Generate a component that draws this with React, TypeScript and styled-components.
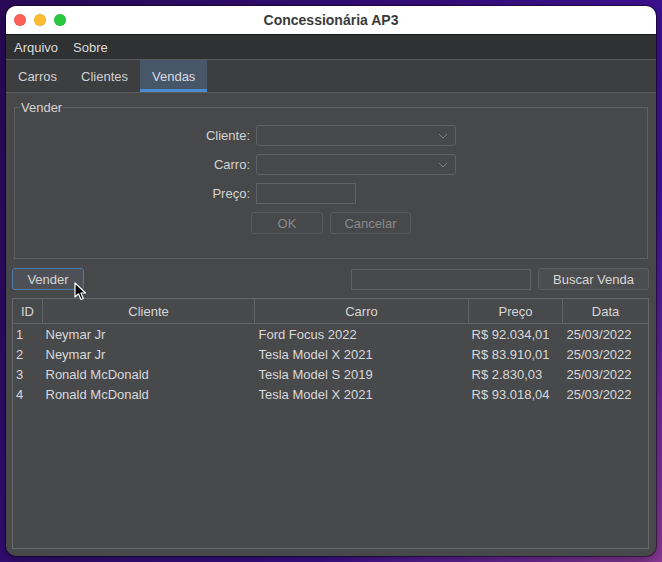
import React from 'react';
import styled, { createGlobalStyle } from 'styled-components';

const GlobalStyle = createGlobalStyle`
  html, body {
    margin: 0;
    padding: 0;
  }
  body {
    font-family: "Liberation Sans", Arial, sans-serif;
    font-size: 13px;
  }
`;

const Desktop = styled.div`
  width: 662px;
  height: 562px;
  padding: 6px;
  box-sizing: border-box;
  background:
    radial-gradient(circle at 100% 100%, #8a3a95 0%, rgba(138, 58, 149, 0) 40%),
    linear-gradient(120deg, #2a0957 0%, #3a0f86 55%, #4a16b0 100%);
  overflow: hidden;
`;

const Window = styled.div`
  position: relative;
  width: 650px;
  height: 550px;
  border-radius: 10px;
  overflow: hidden;
  display: flex;
  flex-direction: column;
  background: #47484a;
  box-shadow: 0 0 0 1px rgba(0, 0, 0, 0.45), 0 4px 14px rgba(0, 0, 0, 0.4);
`;

const TitleBar = styled.div`
  height: 28px;
  flex: 0 0 28px;
  background: #ffffff;
  border-bottom: 1px solid #151515;
  display: grid;
  grid-template-columns: 1fr auto 1fr;
  align-items: center;
`;

const Lights = styled.div`
  display: flex;
  gap: 8px;
  padding-left: 8px;
`;

const Light = styled.span<{ $color: string }>`
  width: 12px;
  height: 12px;
  border-radius: 50%;
  background: ${(p) => p.$color};
  box-shadow: inset 0 0 0 0.5px rgba(0, 0, 0, 0.15);
`;

const Title = styled.div`
  font-size: 14px;
  font-weight: bold;
  color: #3a3a3a;
`;

const MenuBar = styled.div`
  height: 24px;
  flex: 0 0 24px;
  background: #303132;
  border-bottom: 1px solid #57585a;
  display: flex;
  align-items: center;
  gap: 15px;
  padding-left: 8px;
`;

const MenuItem = styled.span`
  color: #dcdcdc;
`;

const TabBar = styled.div`
  height: 32px;
  flex: 0 0 32px;
  background: #3d3e40;
  border-bottom: 1px solid #5a5b5d;
  display: flex;
`;

const Tab = styled.div<{ $active?: boolean }>`
  padding: 0 12px;
  display: flex;
  align-items: center;
  color: ${(p) => (p.$active ? '#d8dce2' : '#d2d2d2')};
  background: ${(p) => (p.$active ? '#48566a' : 'transparent')};
  box-shadow: ${(p) => (p.$active ? 'inset 0 -3px 0 #4a8ad0' : 'none')};
`;

const Content = styled.div`
  flex: 1;
  display: flex;
  flex-direction: column;
  padding: 14px 7px 7px 6px;
  min-height: 0;
`;

const GroupBox = styled.div`
  position: relative;
  margin-left: 2px;
  margin-right: 1px;
  border: 1px solid #5e5f61;
  padding: 17px 0 24px;
`;

const GroupLegend = styled.span`
  position: absolute;
  top: -8px;
  left: 5px;
  padding: 0 1px;
  background: #47484a;
  color: #d4d4d4;
  line-height: 16px;
`;

const FormGrid = styled.div`
  display: grid;
  grid-template-columns: 1fr 200px 185px;
  column-gap: 6px;
  row-gap: 8px;
  align-items: center;
`;

const Label = styled.label`
  grid-column: 1;
  text-align: right;
  color: #d4d4d4;
`;

const Combo = styled.div`
  grid-column: 2;
  height: 21px;
  box-sizing: border-box;
  border: 1px solid #606163;
  border-radius: 3px;
  background: #47484a;
  display: flex;
  align-items: center;
  justify-content: flex-end;
  padding-right: 7px;
`;

const TextInput = styled.div<{ $width?: number }>`
  grid-column: 2;
  width: ${(p) => p.$width ?? 200}px;
  height: 21px;
  box-sizing: border-box;
  border: 1px solid #606163;
  background: #47484a;
`;

const ButtonRow = styled.div`
  grid-column: 2 / 4;
  display: flex;
  gap: 7px;
  margin-left: -5px;
`;

const Button = styled.div<{ $width: number; $disabled?: boolean; $focused?: boolean }>`
  width: ${(p) => p.$width}px;
  height: 22px;
  box-sizing: border-box;
  border: 1px solid ${(p) => (p.$focused ? '#4f7aa8' : p.$disabled ? '#5a5b5d' : '#5c5d5f')};
  border-radius: 3px;
  background: ${(p) => (p.$disabled ? '#47484a' : p.$focused ? '#4d5056' : '#4c4d4f')};
  color: ${(p) => (p.$disabled ? '#8a8a8a' : '#d6d6d6')};
  display: flex;
  align-items: center;
  justify-content: center;
`;

const Toolbar = styled.div`
  position: relative;
  margin-top: 9px;
  display: flex;
  align-items: center;
  gap: 7px;
`;

const Spacer = styled.div`
  flex: 1;
`;

const Cursor = styled.svg`
  position: absolute;
  left: 62px;
  top: 14px;
`;

const TableFrame = styled.div`
  margin-top: 8px;
  flex: 1;
  border: 1px solid #67686a;
  background: #48494b;
  overflow: hidden;
`;

const Table = styled.table`
  width: 100%;
  border-collapse: collapse;
  table-layout: fixed;
  color: #d8d8d8;
`;

const HeadCell = styled.th<{ $width?: number }>`
  width: ${(p) => (p.$width ? `${p.$width}px` : 'auto')};
  height: 24px;
  padding: 0;
  font-weight: normal;
  color: #d6d6d6;
  text-align: center;
  border-bottom: 1px solid #616264;
  border-left: 1px solid #616264;
  &:first-child {
    border-left: none;
  }
`;

const Cell = styled.td`
  height: 20px;
  padding: 0 3px 0 4px;
  white-space: nowrap;
  overflow: hidden;
  &:first-child {
    padding-left: 3px;
  }
  &:nth-child(2),
  &:nth-child(4) {
    padding-left: 3px;
  }
`;

const Chevron = () => (
  <svg width="10" height="6" viewBox="0 0 10 6">
    <path d="M1 1 L5 5 L9 1" fill="none" stroke="#7c7d80" strokeWidth="1" />
  </svg>
);

const sales = [
  { id: 1, cliente: 'Neymar Jr', carro: 'Ford Focus 2022', preco: 'R$ 92.034,01', data: '25/03/2022' },
  { id: 2, cliente: 'Neymar Jr', carro: 'Tesla Model X 2021', preco: 'R$ 83.910,01', data: '25/03/2022' },
  { id: 3, cliente: 'Ronald McDonald', carro: 'Tesla Model S 2019', preco: 'R$ 2.830,03', data: '25/03/2022' },
  { id: 4, cliente: 'Ronald McDonald', carro: 'Tesla Model X 2021', preco: 'R$ 93.018,04', data: '25/03/2022' },
];

const App: React.FC = () => {
  return (
    <>
      <GlobalStyle />
      <Desktop>
        <Window>
          <TitleBar>
            <Lights>
              <Light $color="#fe5f57" />
              <Light $color="#febc2e" />
              <Light $color="#28c840" />
            </Lights>
            <Title>Concessionária AP3</Title>
            <div />
          </TitleBar>
          <MenuBar>
            <MenuItem>Arquivo</MenuItem>
            <MenuItem>Sobre</MenuItem>
          </MenuBar>
          <TabBar>
            <Tab>Carros</Tab>
            <Tab>Clientes</Tab>
            <Tab $active>Vendas</Tab>
          </TabBar>
          <Content>
            <GroupBox>
              <GroupLegend>Vender</GroupLegend>
              <FormGrid>
                <Label>Cliente:</Label>
                <Combo>
                  <Chevron />
                </Combo>
                <Label>Carro:</Label>
                <Combo>
                  <Chevron />
                </Combo>
                <Label>Preço:</Label>
                <TextInput $width={100} />
                <ButtonRow>
                  <Button $width={72} $disabled>OK</Button>
                  <Button $width={81} $disabled>Cancelar</Button>
                </ButtonRow>
              </FormGrid>
            </GroupBox>
            <Toolbar>
              <Button $width={72} $focused>Vender</Button>
              <Spacer />
              <TextInput $width={180} />
              <Button $width={111}>Buscar Venda</Button>
              <Cursor width="14" height="20" viewBox="0 0 14 20">
                <path
                  d="M1 1 L1 15 L4.5 11.8 L7 17.5 L9.3 16.5 L6.9 11 L11.5 11 Z"
                  fill="#000"
                  stroke="#fff"
                  strokeWidth="1.2"
                  strokeLinejoin="round"
                />
              </Cursor>
            </Toolbar>
            <TableFrame>
              <Table>
                <thead>
                  <tr>
                    <HeadCell $width={29}>ID</HeadCell>
                    <HeadCell $width={211}>Cliente</HeadCell>
                    <HeadCell $width={213}>Carro</HeadCell>
                    <HeadCell $width={93}>Preço</HeadCell>
                    <HeadCell>Data</HeadCell>
                  </tr>
                </thead>
                <tbody>
                  {sales.map((s) => (
                    <tr key={s.id}>
                      <Cell>{s.id}</Cell>
                      <Cell>{s.cliente}</Cell>
                      <Cell>{s.carro}</Cell>
                      <Cell>{s.preco}</Cell>
                      <Cell>{s.data}</Cell>
                    </tr>
                  ))}
                </tbody>
              </Table>
            </TableFrame>
          </Content>
        </Window>
      </Desktop>
    </>
  );
};

export default App;
